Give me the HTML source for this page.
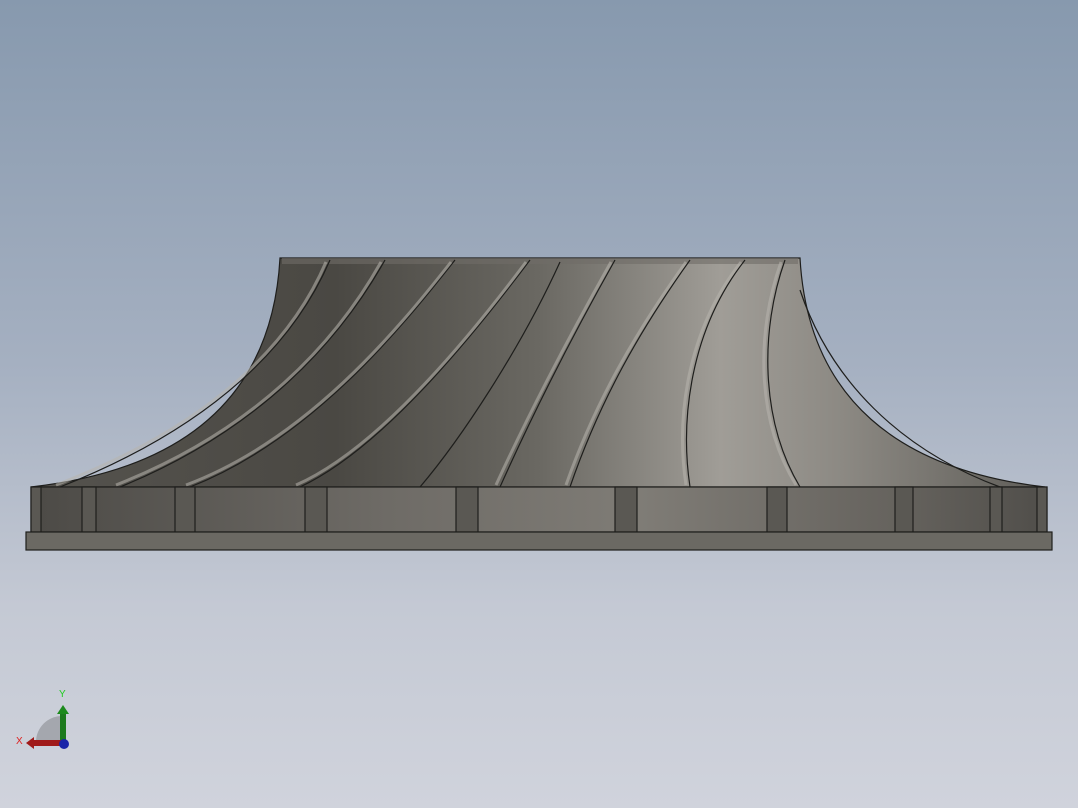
<!DOCTYPE html>
<html><head><style>
html,body{margin:0;padding:0;width:1078px;height:808px;overflow:hidden}
body{background:linear-gradient(#8799ae 0%,#a5b0c1 45%,#c4c9d4 75%,#d0d3dc 100%)}
svg{position:absolute;left:0;top:0}
</style></head><body>
<svg width="1078" height="808" viewBox="0 0 1078 808">
<defs>
<linearGradient id="body" x1="0" x2="1" y1="0" y2="0">
<stop offset="0" stop-color="#55534e"/>
<stop offset="0.3" stop-color="#4a4843"/>
<stop offset="0.5" stop-color="#6a6862"/>
<stop offset="0.68" stop-color="#a09d97"/>
<stop offset="0.8" stop-color="#8c8983"/>
<stop offset="1" stop-color="#5f5d58"/>
</linearGradient>
<linearGradient id="band" x1="0" x2="1">
<stop offset="0" stop-color="#4c4a46"/>
<stop offset="0.35" stop-color="#6e6b66"/>
<stop offset="0.6" stop-color="#7f7c76"/>
<stop offset="0.85" stop-color="#66635e"/>
<stop offset="1" stop-color="#504e4a"/>
</linearGradient>
</defs>
<path d="M280,258 L800,258 C808,400 900,470 1045,487 L31,487 C180,470 272,400 280,258 Z" fill="url(#body)" stroke="#1e1e1c" stroke-width="1.2"/>
<rect x="282" y="258" width="516" height="6" fill="#6f6d68" opacity="0.6"/>
<g fill="none" stroke="#1e1e1c" stroke-width="1.2">
<path d="M330,260 C300,330 230,420 60,487"/>
<path d="M385,260 C340,340 260,430 120,487"/>
<path d="M455,260 C400,330 310,440 190,487"/>
<path d="M530,260 C470,340 380,450 300,487"/>
<path d="M560,262 C520,350 460,440 420,487"/>
<path d="M615,260 C570,340 530,420 500,487"/>
<path d="M690,260 C640,330 600,400 570,487"/>
<path d="M745,260 C690,330 680,420 690,487"/>
<path d="M785,260 C760,330 760,420 800,487"/>
<path d="M800,290 C830,380 900,450 1000,487"/>
</g>
<g fill="none" stroke="#b8b5ae" stroke-width="3" opacity="0.55">
<path d="M326,262 C296,332 226,420 56,485"/>
<path d="M381,262 C336,342 256,430 116,485"/>
<path d="M451,262 C396,332 306,440 186,485"/>
<path d="M526,262 C466,342 376,450 296,485"/>
<path d="M611,262 C566,342 526,420 496,485"/>
<path d="M686,262 C636,332 596,400 566,485"/>
<path d="M741,262 C686,332 676,420 686,485"/>
<path d="M781,262 C756,332 756,420 796,485"/>
</g>
<rect x="31" y="487" width="1016" height="45" fill="url(#band)" stroke="#1e1e1c" stroke-width="1.2"/>
<g fill="#5a5853" stroke="#1e1e1c" stroke-width="1.2">
<rect x="31" y="487" width="10" height="45"/>
<rect x="82" y="487" width="14" height="45"/>
<rect x="175" y="487" width="20" height="45"/>
<rect x="305" y="487" width="22" height="45"/>
<rect x="456" y="487" width="22" height="45"/>
<rect x="615" y="487" width="22" height="45"/>
<rect x="767" y="487" width="20" height="45"/>
<rect x="895" y="487" width="18" height="45"/>
<rect x="990" y="487" width="12" height="45"/>
<rect x="1037" y="487" width="10" height="45"/>
</g>
<rect x="26" y="532" width="1026" height="18" fill="#6b6963" stroke="#1e1e1c" stroke-width="1.2"/>
<path d="M62,742 L36,742 A26,26 0 0 1 62,716 Z" fill="#9a9ca2" opacity="0.8"/>
<rect x="60" y="712" width="6" height="32" fill="#1d7a1d"/>
<polygon points="57,714 69,714 63,705" fill="#1d8a1d"/>
<rect x="32" y="740" width="30" height="6" fill="#a01a1a"/>
<polygon points="34,737 34,749 26,743" fill="#a01a1a"/>
<circle cx="64" cy="744" r="5" fill="#1a24a8"/>
<text x="59" y="697" font-family="Liberation Sans,sans-serif" font-size="10" fill="#22cc22">Y</text>
<text x="16" y="744" font-family="Liberation Sans,sans-serif" font-size="10" fill="#dd2222">X</text>
</svg>
</body></html>
